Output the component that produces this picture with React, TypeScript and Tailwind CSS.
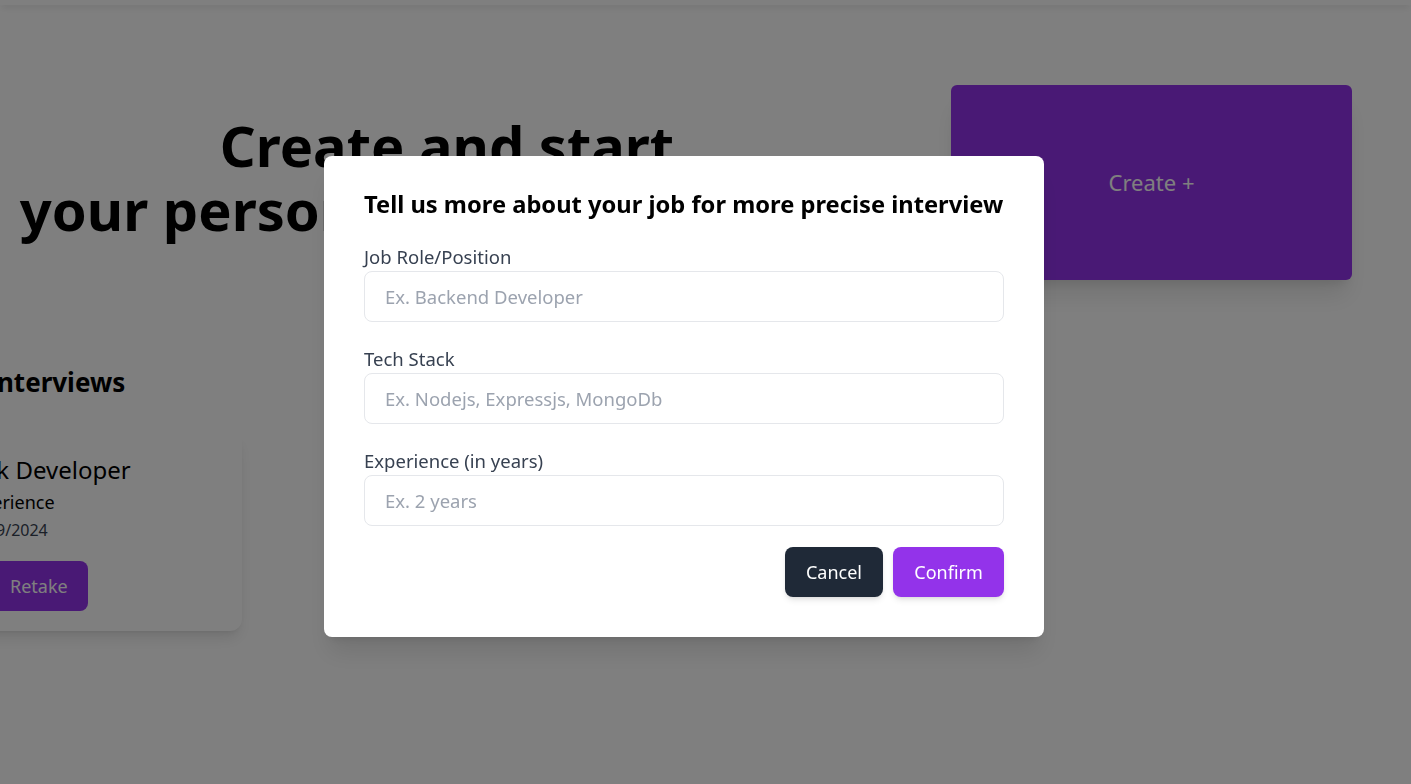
import React from "react";

export default function App() {
  return (
    <div
      className="relative min-h-screen w-full overflow-hidden bg-white"
      style={{ fontFamily: '"Noto Sans", "Open Sans", sans-serif' }}
    >
      <div className="h-[5px] w-full bg-white shadow-md" />

      <div className="flex items-start">
        <div className="flex w-[894px] shrink-0 flex-col">
          <h1 className="mt-[108px] text-center text-[56px] font-bold leading-[64px] text-black whitespace-nowrap">
            Create and start
            <br />
            your personalized AI interview
          </h1>
          <h2 className="-ml-[131px] mt-[123px] text-[26px] font-bold leading-9 text-black whitespace-nowrap">
            Previous Interviews
          </h2>
          <div className="-ml-[155px] mt-[30px] w-[397px] rounded-xl bg-white pb-5 pl-[30px] pt-6 shadow-lg">
            <div className="text-2xl leading-8 text-black whitespace-nowrap">MERN Stack Developer</div>
            <div className="mt-0.5 text-lg leading-7 text-black whitespace-nowrap">2 years of experience</div>
            <div className="mt-0.5 text-base leading-6 text-[#374151] whitespace-nowrap">Created At: 19/09/2024</div>
            <div className="mt-[19px] flex gap-2.5">
              <button className="h-[50px] w-[105px] rounded-lg border border-[#9333ea] text-lg text-[#9333ea]">
                Feedback
              </button>
              <button className="h-[50px] rounded-lg bg-[#9333ea] px-5 text-lg text-white">
                Retake
              </button>
            </div>
          </div>
        </div>
        <div className="ml-[57px] mt-[80px] flex h-[195px] w-[401px] items-center justify-center rounded-md bg-[#9333ea] text-[22px] text-white shadow-xl">
          Create +
        </div>
      </div>

      <div className="fixed inset-0 bg-black/50">
        <div className="absolute left-[324px] top-[156px] w-[720px] rounded-lg bg-white px-10 pb-10 pt-8 shadow-xl">
          <h3 className="text-[23.7px] font-bold leading-8 text-black whitespace-nowrap">
            Tell us more about your job for more precise interview
          </h3>
          <div className="mt-[23px] flex flex-col">
            <label className="text-[18.5px] leading-7 text-[#374151]">Job Role/Position</label>
            <div className="flex h-[51px] items-center rounded-lg border border-[#e5e7eb] px-5 text-[18.5px] text-[#9ca3af]">
              Ex. Backend Developer
            </div>
            <label className="mt-[23px] text-[18.5px] leading-7 text-[#374151]">Tech Stack</label>
            <div className="flex h-[51px] items-center rounded-lg border border-[#e5e7eb] px-5 text-[18.5px] text-[#9ca3af]">
              Ex. Nodejs, Expressjs, MongoDb
            </div>
            <label className="mt-[23px] text-[18.5px] leading-7 text-[#374151]">Experience (in years)</label>
            <div className="flex h-[51px] items-center rounded-lg border border-[#e5e7eb] px-5 text-[18.5px] text-[#9ca3af]">
              Ex. 2 years
            </div>
          </div>
          <div className="mt-[21px] flex justify-end gap-2.5">
            <button className="h-[50px] w-[98px] rounded-lg bg-[#1f2937] text-lg text-white shadow-md">
              Cancel
            </button>
            <button className="h-[50px] w-[111px] rounded-lg bg-[#9333ea] text-lg text-white shadow-md">
              Confirm
            </button>
          </div>
        </div>
      </div>
    </div>
  );
}
